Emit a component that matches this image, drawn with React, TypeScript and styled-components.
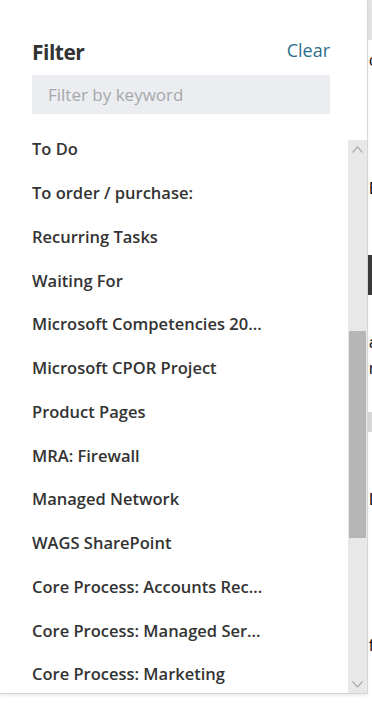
import React from "react";
import styled, { createGlobalStyle } from "styled-components";

const Global = createGlobalStyle`
  html, body { margin: 0; padding: 0; background: #ffffff; }
  #root { height: 703px; }
  * { box-sizing: border-box; }
`;

const Screen = styled.div`
  height: 703px;
  width: 372px;
  display: flex;
  overflow: hidden;
  background: #ffffff;
  font-family: "Open Sans", "Noto Sans", sans-serif;
`;

const Panel = styled.div`
  width: 368px;
  height: 694px;
  flex: none;
  display: flex;
  flex-direction: column;
  background: #ffffff;
  border-right: 1px solid #d6d6d6;
  border-bottom: 1px solid #d2d2d2;
  box-shadow: 0 2px 3px rgba(0, 0, 0, 0.08);
  position: relative;
  z-index: 1;
`;

const Header = styled.div`
  display: flex;
  align-items: flex-start;
  justify-content: space-between;
  padding: 38px 37px 0 32px;
`;

const Title = styled.h2`
  margin: 0;
  font-size: 21px;
  line-height: 28px;
  font-weight: 700;
  color: #333333;
  letter-spacing: -0.5px;
`;

const ClearLink = styled.a`
  font-size: 18px;
  line-height: 24px;
  font-weight: 400;
  color: #2c6f8f;
  cursor: pointer;
`;

const SearchBox = styled.div`
  margin: 9px 37px 0 32px;
  height: 39px;
  background: #ebedf0;
  display: flex;
  align-items: center;
  padding-left: 16px;
  font-size: 17px;
  color: #a5a8ac;
`;

const ListArea = styled.div`
  flex: 1;
  min-height: 0;
  margin-top: 26px;
  display: flex;
`;

const List = styled.ul`
  flex: 1;
  margin: 0;
  padding: 0 0 0 32px;
  list-style: none;
  overflow: hidden;
  min-width: 0;
`;

const Item = styled.li<{ $first?: boolean }>`
  height: ${(p) => (p.$first ? "31px" : "43.75px")};
  line-height: ${(p) => (p.$first ? "18px" : "43.75px")};
  font-size: 16.5px;
  font-weight: 600;
  color: #333333;
  max-width: 234px;
  white-space: nowrap;
  overflow: hidden;
  text-overflow: ellipsis;
`;

const ScrollBar = styled.div`
  width: 19px;
  flex: none;
  background: #e8e8e8;
  display: flex;
  flex-direction: column;
`;

const ArrowButton = styled.div`
  height: 18px;
  display: flex;
  align-items: center;
  justify-content: center;
  flex: none;
`;

const Track = styled.div`
  flex: 1;
  display: flex;
  flex-direction: column;
`;

const Thumb = styled.div<{ $offset: number; $size: number }>`
  margin-top: ${(p) => p.$offset}px;
  height: ${(p) => p.$size}px;
  background: #b6b6b6;
  margin-left: 1px;
  margin-right: 1px;
`;

const Behind = styled.div`
  flex: 1;
  display: flex;
  flex-direction: column;
  background: #ffffff;
  position: relative;
`;

const BehindTop = styled.div`
  height: 40px;
  background: #e4e4e4;
`;

const BehindGlyph = styled.div<{ $top: number }>`
  margin-top: ${(p) => p.$top}px;
  font-family: "Liberation Sans", sans-serif;
  font-size: 16px;
  line-height: 16px;
  color: #111;
  margin-left: 1px;
`;

const BehindBlock = styled.div<{ $top: number; $h: number; $c: string }>`
  margin-top: ${(p) => p.$top}px;
  height: ${(p) => p.$h}px;
  background: ${(p) => p.$c};
`;

const BottomStrip = styled.div`
  position: absolute;
  left: 0;
  right: 0;
  top: 696px;
  height: 7px;
  display: flex;
`;

const BottomPart = styled.div<{ $w?: number; $c: string }>`
  ${(p) => (p.$w ? `width: ${p.$w}px; flex: none;` : "flex: 1;")}
  background: ${(p) => p.$c};
`;

const Chevron = ({ up }: { up?: boolean }) => (
  <svg width="11" height="7" viewBox="0 0 11 7">
    <path
      d={up ? "M0.5 6.5 L5.5 1 L10.5 6.5" : "M0.5 0.5 L5.5 6 L10.5 0.5"}
      fill="none"
      stroke="#9a9a9a"
      strokeWidth="1.1"
    />
  </svg>
);

const items = [
  "To Do",
  "To order / purchase:",
  "Recurring Tasks",
  "Waiting For",
  "Microsoft Competencies 2020",
  "Microsoft CPOR Project",
  "Product Pages",
  "MRA: Firewall",
  "Managed Network",
  "WAGS SharePoint",
  "Core Process: Accounts Receivable",
  "Core Process: Managed Services",
  "Core Process: Marketing",
];

export default function App() {
  return (
    <>
      <Global />
      <Screen>
        <Panel>
          <Header>
            <Title>Filter</Title>
            <ClearLink>Clear</ClearLink>
          </Header>
          <SearchBox>Filter by keyword</SearchBox>
          <ListArea>
            <List>
              {items.map((t, i) => (
                <Item key={t} $first={i === 0}>
                  {t}
                </Item>
              ))}
            </List>
            <ScrollBar>
              <ArrowButton>
                <Chevron up />
              </ArrowButton>
              <Track>
                <Thumb $offset={173} $size={207} />
              </Track>
              <ArrowButton>
                <Chevron />
              </ArrowButton>
            </ScrollBar>
          </ListArea>
        </Panel>
        <Behind>
          <BehindTop />
          <BehindGlyph $top={13}>c</BehindGlyph>
          <BehindGlyph $top={112}>E</BehindGlyph>
          <BehindBlock $top={58} $h={40} $c="#3a3a3a" />
          <BehindGlyph $top={40}>a</BehindGlyph>
          <BehindGlyph $top={10}>r</BehindGlyph>
          <BehindBlock $top={35} $h={20} $c="#d8d8d8" />
          <BehindGlyph $top={60}>L</BehindGlyph>
          <BehindGlyph $top={130}>f</BehindGlyph>
          <BottomStrip>
            <BottomPart $w={260} $c="#ffffff" />
            <BottomPart $c="#ececec" />
          </BottomStrip>
        </Behind>
      </Screen>
    </>
  );
}
